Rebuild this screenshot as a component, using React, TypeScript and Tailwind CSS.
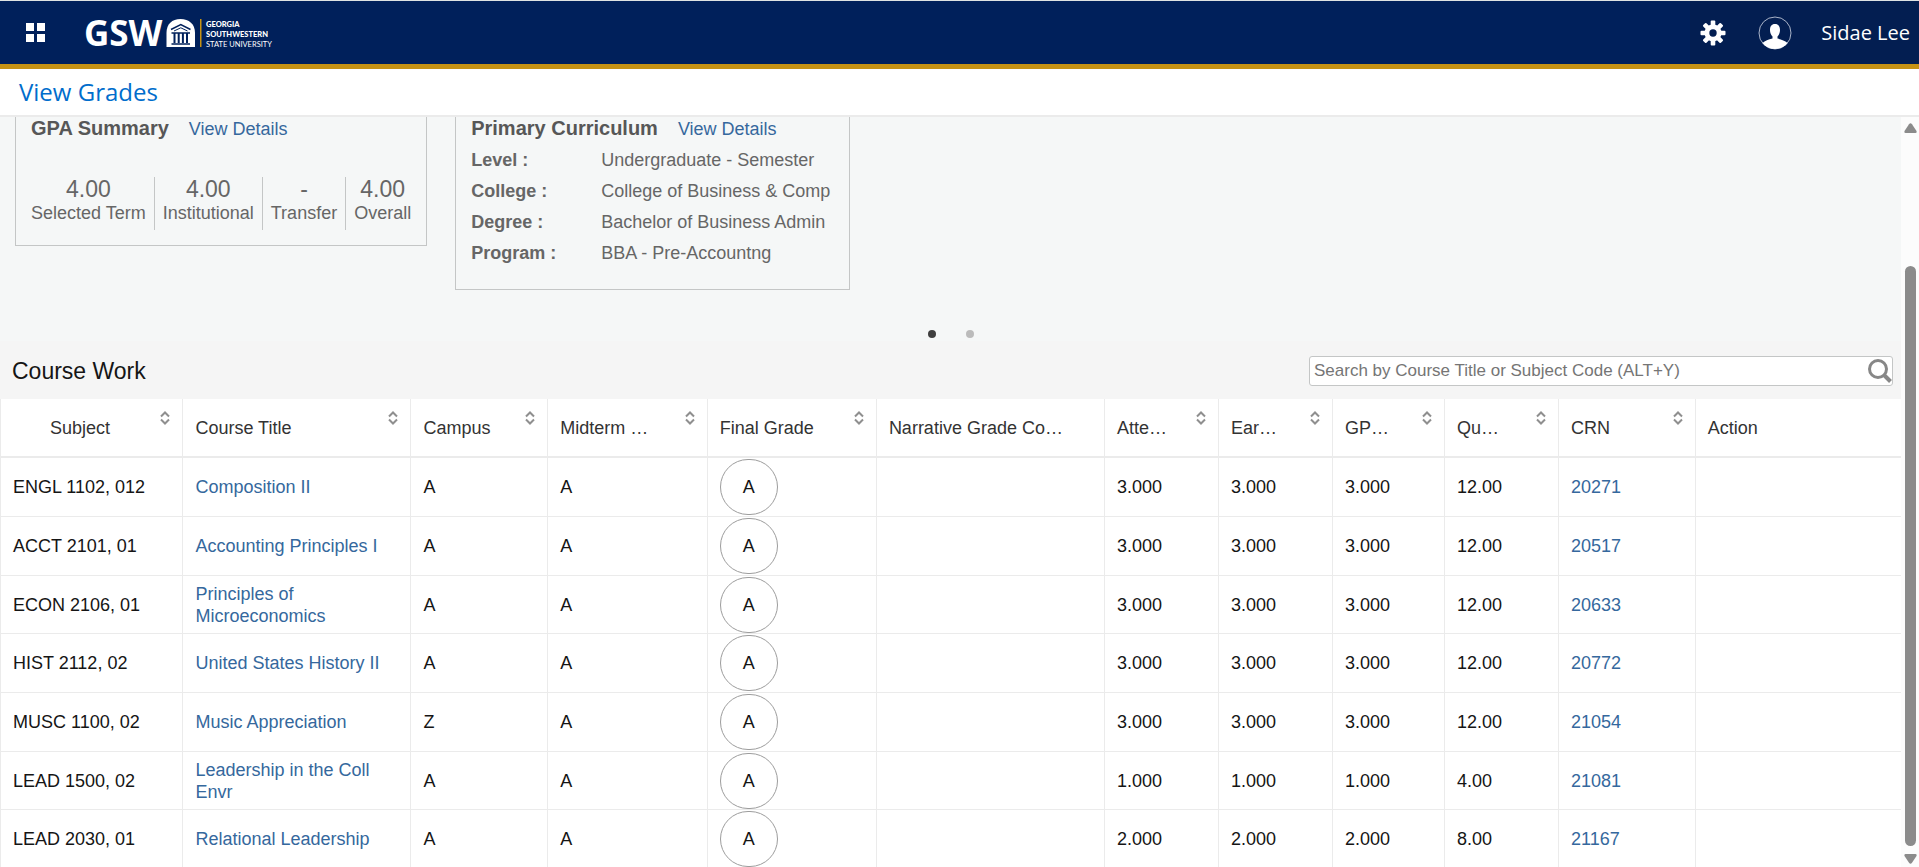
import type { ReactNode } from 'react';

interface Course {
  subject: string;
  title: string;
  campus: string;
  midterm: string;
  final: string;
  hours: string;
  quality: string;
  crn: string;
}

interface Column {
  label: string;
  width: string;
  sortable: boolean;
}

const columns: Column[] = [
  { label: 'Subject', width: 'w-[9.6%]', sortable: true },
  { label: 'Course Title', width: 'w-[12%]', sortable: true },
  { label: 'Campus', width: 'w-[7.2%]', sortable: true },
  { label: 'Midterm …', width: 'w-[8.4%]', sortable: true },
  { label: 'Final Grade', width: 'w-[8.9%]', sortable: true },
  { label: 'Narrative Grade Co…', width: 'w-[12%]', sortable: false },
  { label: 'Atte…', width: 'w-[6%]', sortable: true },
  { label: 'Ear…', width: 'w-[6%]', sortable: true },
  { label: 'GP…', width: 'w-[5.9%]', sortable: true },
  { label: 'Qu…', width: 'w-[6%]', sortable: true },
  { label: 'CRN', width: 'w-[7.2%]', sortable: true },
  { label: 'Action', width: 'w-auto', sortable: false }
];

const courses: Course[] = [
  { subject: 'ENGL 1102, 012', title: 'Composition II', campus: 'A', midterm: 'A', final: 'A', hours: '3.000', quality: '12.00', crn: '20271' },
  { subject: 'ACCT 2101, 01', title: 'Accounting Principles I', campus: 'A', midterm: 'A', final: 'A', hours: '3.000', quality: '12.00', crn: '20517' },
  { subject: 'ECON 2106, 01', title: 'Principles of Microeconomics', campus: 'A', midterm: 'A', final: 'A', hours: '3.000', quality: '12.00', crn: '20633' },
  { subject: 'HIST 2112, 02', title: 'United States History II', campus: 'A', midterm: 'A', final: 'A', hours: '3.000', quality: '12.00', crn: '20772' },
  { subject: 'MUSC 1100, 02', title: 'Music Appreciation', campus: 'Z', midterm: 'A', final: 'A', hours: '3.000', quality: '12.00', crn: '21054' },
  { subject: 'LEAD 1500, 02', title: 'Leadership in the Coll Envr', campus: 'A', midterm: 'A', final: 'A', hours: '1.000', quality: '4.00', crn: '21081' },
  { subject: 'LEAD 2030, 01', title: 'Relational Leadership', campus: 'A', midterm: 'A', final: 'A', hours: '2.000', quality: '8.00', crn: '21167' }
];

const gpa = [
  { value: '4.00', label: 'Selected Term' },
  { value: '4.00', label: 'Institutional' },
  { value: '-', label: 'Transfer' },
  { value: '4.00', label: 'Overall' }
];

const curriculum = [
  { label: 'Level :', value: 'Undergraduate - Semester' },
  { label: 'College :', value: 'College of Business & Comp' },
  { label: 'Degree :', value: 'Bachelor of Business Admin' },
  { label: 'Program :', value: 'BBA - Pre-Accountng' }
];

const Logo = () => (
  <svg className="overflow-visible" width="190" height="60" viewBox="0 -10 190 60" role="img" aria-label="Georgia Southwestern State University">
    <g fill="#fff">
      <text x="-2" y="33" fontSize="35" fontWeight="700" fontFamily="'Open Sans', sans-serif">GSW</text>
      <g fontSize="7.500" fontFamily="Lato, sans-serif">
        <text x="120" y="14" fontWeight="900">GEORGIA</text>
        <text x="120" y="24" fontWeight="900">SOUTHWESTERN</text>
        <text x="120" y="34" fontWeight="400">STATE UNIVERSITY</text>
      </g>
    </g>
    <path fill="#fff" d="M80.500 34V20C80.500 11 86 6 94.500 6S109 11 109 20V34Z" />
    <g fill="none" stroke="#00205b">
      <path strokeWidth="1.500" d="M85 16.500L94.800 11.500L104.500 16.500" />
      <path strokeWidth="1" d="M88 18L94.800 14.800L101.500 18" />
      <path strokeWidth="1.500" d="M85.500 20H104M85.500 31H104" />
      <path strokeWidth="2" d="M88.500 20V30M92.700 20V30M96.900 20V30M101 20V30" />
    </g>
    <path fill="#c69214" d="M114 6H115.500V34H114Z" />
  </svg>
);

const GearIcon = () => (
  <svg width="26" height="26" viewBox="-13 -13 26 26" aria-hidden="true">
    <g fill="#fff">
      {[0, 45, 90, 135].map((angle) => (
        <rect key={angle} x="-2.300" y="-12.500" width="4.600" height="25" rx="1" transform={`rotate(${angle})`} />
      ))}
      <circle r="8.500" />
    </g>
    <circle r="3.700" fill="#031e51" />
  </svg>
);

const UserIcon = () => (
  <svg width="34" height="34" viewBox="0 0 34 34" aria-hidden="true">
    <circle cx="17" cy="17" r="16" fill="none" stroke="#a9b3c8" strokeWidth="1" />
    <path fill="#fff" d="M17 8C20.500 8 22 10.500 22 14C22 16.800 21 19 19.500 20.500V22.500C23.500 23.500 27 24.500 29.500 27C26.500 31 22 33 17 33S7.500 31 4.500 27C7 24.500 10.500 23.500 14.500 22.500V20.500C13 19 12 16.800 12 14C12 10.500 13.500 8 17 8Z" />
  </svg>
);

const SortIcon = () => (
  <svg width="10" height="14" viewBox="0 0 10 14" fill="none" stroke="#8f8f8f" strokeWidth="2" aria-hidden="true">
    <path d="M1 5.500L5 1.500L9 5.500M1 8.500L5 12.500L9 8.500" />
  </svg>
);

const SearchIcon = () => (
  <svg width="24" height="24" viewBox="0 0 24 24" fill="none" stroke="#878787" aria-hidden="true">
    <circle cx="10" cy="10" r="8.500" strokeWidth="3" />
    <path d="M16 16L22.500 22.500" strokeWidth="4" />
  </svg>
);

const Card = ({ title, className, children }: { title: string; className: string; children: ReactNode }) => (
  <section className={`border-x border-b border-[#c4c6c6] px-[15px] ${className}`}>
    <div className="flex items-baseline gap-5 leading-[22px]">
      <h2 className="text-xl leading-[22px] font-bold text-[#575757]">{title}</h2>
      <a href="#details" className="text-lg leading-[22px] text-[#35689d]">View Details</a>
    </div>
    {children}
  </section>
);

const Cell = ({ children }: { children?: ReactNode }) => (
  <td className="border-r border-b border-[#ebebeb] px-3 py-0 last:border-r-0">{children}</td>
);

const Header = () => (
  <header className="flex h-[69px] shrink-0 items-stretch justify-between border-t border-b-[5px] border-t-[#dfe3e3] border-b-[#c69214] bg-[#00205b]">
    <div className="flex items-center gap-[41px] pl-[26px]">
      <button type="button" aria-label="Menu" className="grid grid-cols-2 gap-[3px]">
        <span className="h-2 w-2 bg-white"></span>
        <span className="h-2 w-2 bg-white"></span>
        <span className="h-2 w-2 bg-white"></span>
        <span className="h-2 w-2 bg-white"></span>
      </button>
      <Logo />
    </div>
    <div className="flex items-center bg-[#031e51] pr-[9px] pl-[10px] text-white">
      <button type="button" aria-label="Settings"><GearIcon /></button>
      <button type="button" className="ml-8 flex items-center gap-[29px] text-xl">
        <UserIcon />
        Sidae Lee
      </button>
    </div>
  </header>
);

const CourseTable = () => (
  <table className="w-full table-fixed border-separate border-spacing-0 border-l border-[#ebebeb] bg-white text-lg leading-[22px]">
    <colgroup>
      {columns.map((column) => (
        <col key={column.label} className={column.width} />
      ))}
    </colgroup>
    <thead>
      <tr className="h-[59px]">
        {columns.map((column, index) => (
          <th
            key={column.label}
            className={`relative border-r border-b-2 border-[#ebebeb] py-0 pr-0 text-left font-normal whitespace-nowrap text-[#333] last:border-r-0 ${index === 0 ? 'pl-[49px]' : 'pl-3'}`}
          >
            {column.label}
            {column.sortable && (
              <button type="button" aria-label={`Sort by ${column.label}`} className="absolute top-3 right-3">
                <SortIcon />
              </button>
            )}
          </th>
        ))}
      </tr>
    </thead>
    <tbody className="text-[#151515]">
      {courses.map((course) => (
        <tr key={course.crn} className="h-[59px] nth-[3n]:h-[58px]">
          <Cell>{course.subject}</Cell>
          <Cell><a href="#course" className="text-[#35689d]">{course.title}</a></Cell>
          <Cell>{course.campus}</Cell>
          <Cell>{course.midterm}</Cell>
          <Cell>
            <span className="flex h-14 w-[58px] items-center justify-center rounded-full border border-[#9d9d9d]">{course.final}</span>
          </Cell>
          <Cell />
          <Cell>{course.hours}</Cell>
          <Cell>{course.hours}</Cell>
          <Cell>{course.hours}</Cell>
          <Cell>{course.quality}</Cell>
          <Cell><a href="#crn" className="text-[#35689d]">{course.crn}</a></Cell>
          <Cell />
        </tr>
      ))}
    </tbody>
  </table>
);

const App = () => {
  return (
    <div className="flex h-screen flex-col overflow-hidden bg-white font-['Open_Sans',sans-serif]">
      <Header />
      <div className="flex h-12 shrink-0 items-center border-b-2 border-[#ebebeb] pl-[19px]">
        <h1 className="text-2xl text-[#006dcc]">View Grades</h1>
      </div>

      <div className="flex min-h-0 flex-1 font-['Liberation_Sans',Arial,sans-serif]">
        <main className="min-w-0 flex-1 overflow-hidden bg-[#f5f5f5]">
          <div className="bg-[#f5f7f7] pb-[3px]">
            <div className="flex items-start gap-7 pl-[15px]">
              <Card title="GPA Summary" className="pb-[15px]">
                <dl className="mt-[37px] flex">
                  {gpa.map((item) => (
                    <div
                      key={item.label}
                      className="flex h-[53px] flex-col-reverse justify-end border-l border-[#c4c6c6] px-2 text-center first:border-l-0 first:pl-0 last:pr-0"
                    >
                      <dt className="text-lg leading-6 text-[#666]">{item.label}</dt>
                      <dd className="text-[23px] leading-6 text-[#666]">{item.value}</dd>
                    </div>
                  ))}
                </dl>
              </Card>
              <Card title="Primary Curriculum" className="pb-5">
                <dl className="mt-[5px] pr-1 text-lg text-[#666]">
                  {curriculum.map((item) => (
                    <div key={item.label} className="flex leading-[31px]">
                      <dt className="w-[130px] font-bold">{item.label}</dt>
                      <dd>{item.value}</dd>
                    </div>
                  ))}
                </dl>
              </Card>
            </div>
            <div className="mt-10 flex justify-center gap-[30px]">
              <button type="button" aria-label="Slide 1" className="h-2 w-2 rounded-full bg-[#3f3f3f]"></button>
              <button type="button" aria-label="Slide 2" className="h-2 w-2 rounded-full bg-[#bbb]"></button>
            </div>
          </div>

          <div className="flex h-[58px] items-center justify-between pt-[2px] pr-2 pl-3">
            <h2 className="text-[23px] text-[#151515]">Course Work</h2>
            <label className="flex h-[30px] w-[584px] items-center rounded-[3px] border border-[#c4c6c6] bg-white pl-1">
              <input
                type="search"
                aria-label="Search by Course Title or Subject Code"
                placeholder="Search by Course Title or Subject Code (ALT+Y)"
                className="min-w-0 flex-1 text-[17px] outline-none placeholder:text-[#757575]"
              />
              <SearchIcon />
            </label>
          </div>

          <CourseTable />
        </main>

        <div className="flex w-[18px] flex-col items-center bg-[#fcfcfc] pt-[6px] pb-[3px]" aria-hidden="true">
          <svg width="13" height="10" viewBox="0 0 13 10"><path fill="#8b8b8b" d="M5 1.200Q6.500 -.5 8 1.200L12.500 8Q13 10 11.500 10H1.500Q0 10 .5 8Z" /></svg>
          <div className="mt-[133px] w-[11px] flex-1 rounded-full bg-[#8b8b8b]"></div>
          <svg className="mt-2" width="13" height="10" viewBox="0 0 13 10"><path fill="#8b8b8b" d="M5 8.800Q6.500 10.500 8 8.800L12.500 2Q13 0 11.500 0H1.500Q0 0 .5 2Z" /></svg>
        </div>
      </div>
    </div>
  );
};

export default App;
